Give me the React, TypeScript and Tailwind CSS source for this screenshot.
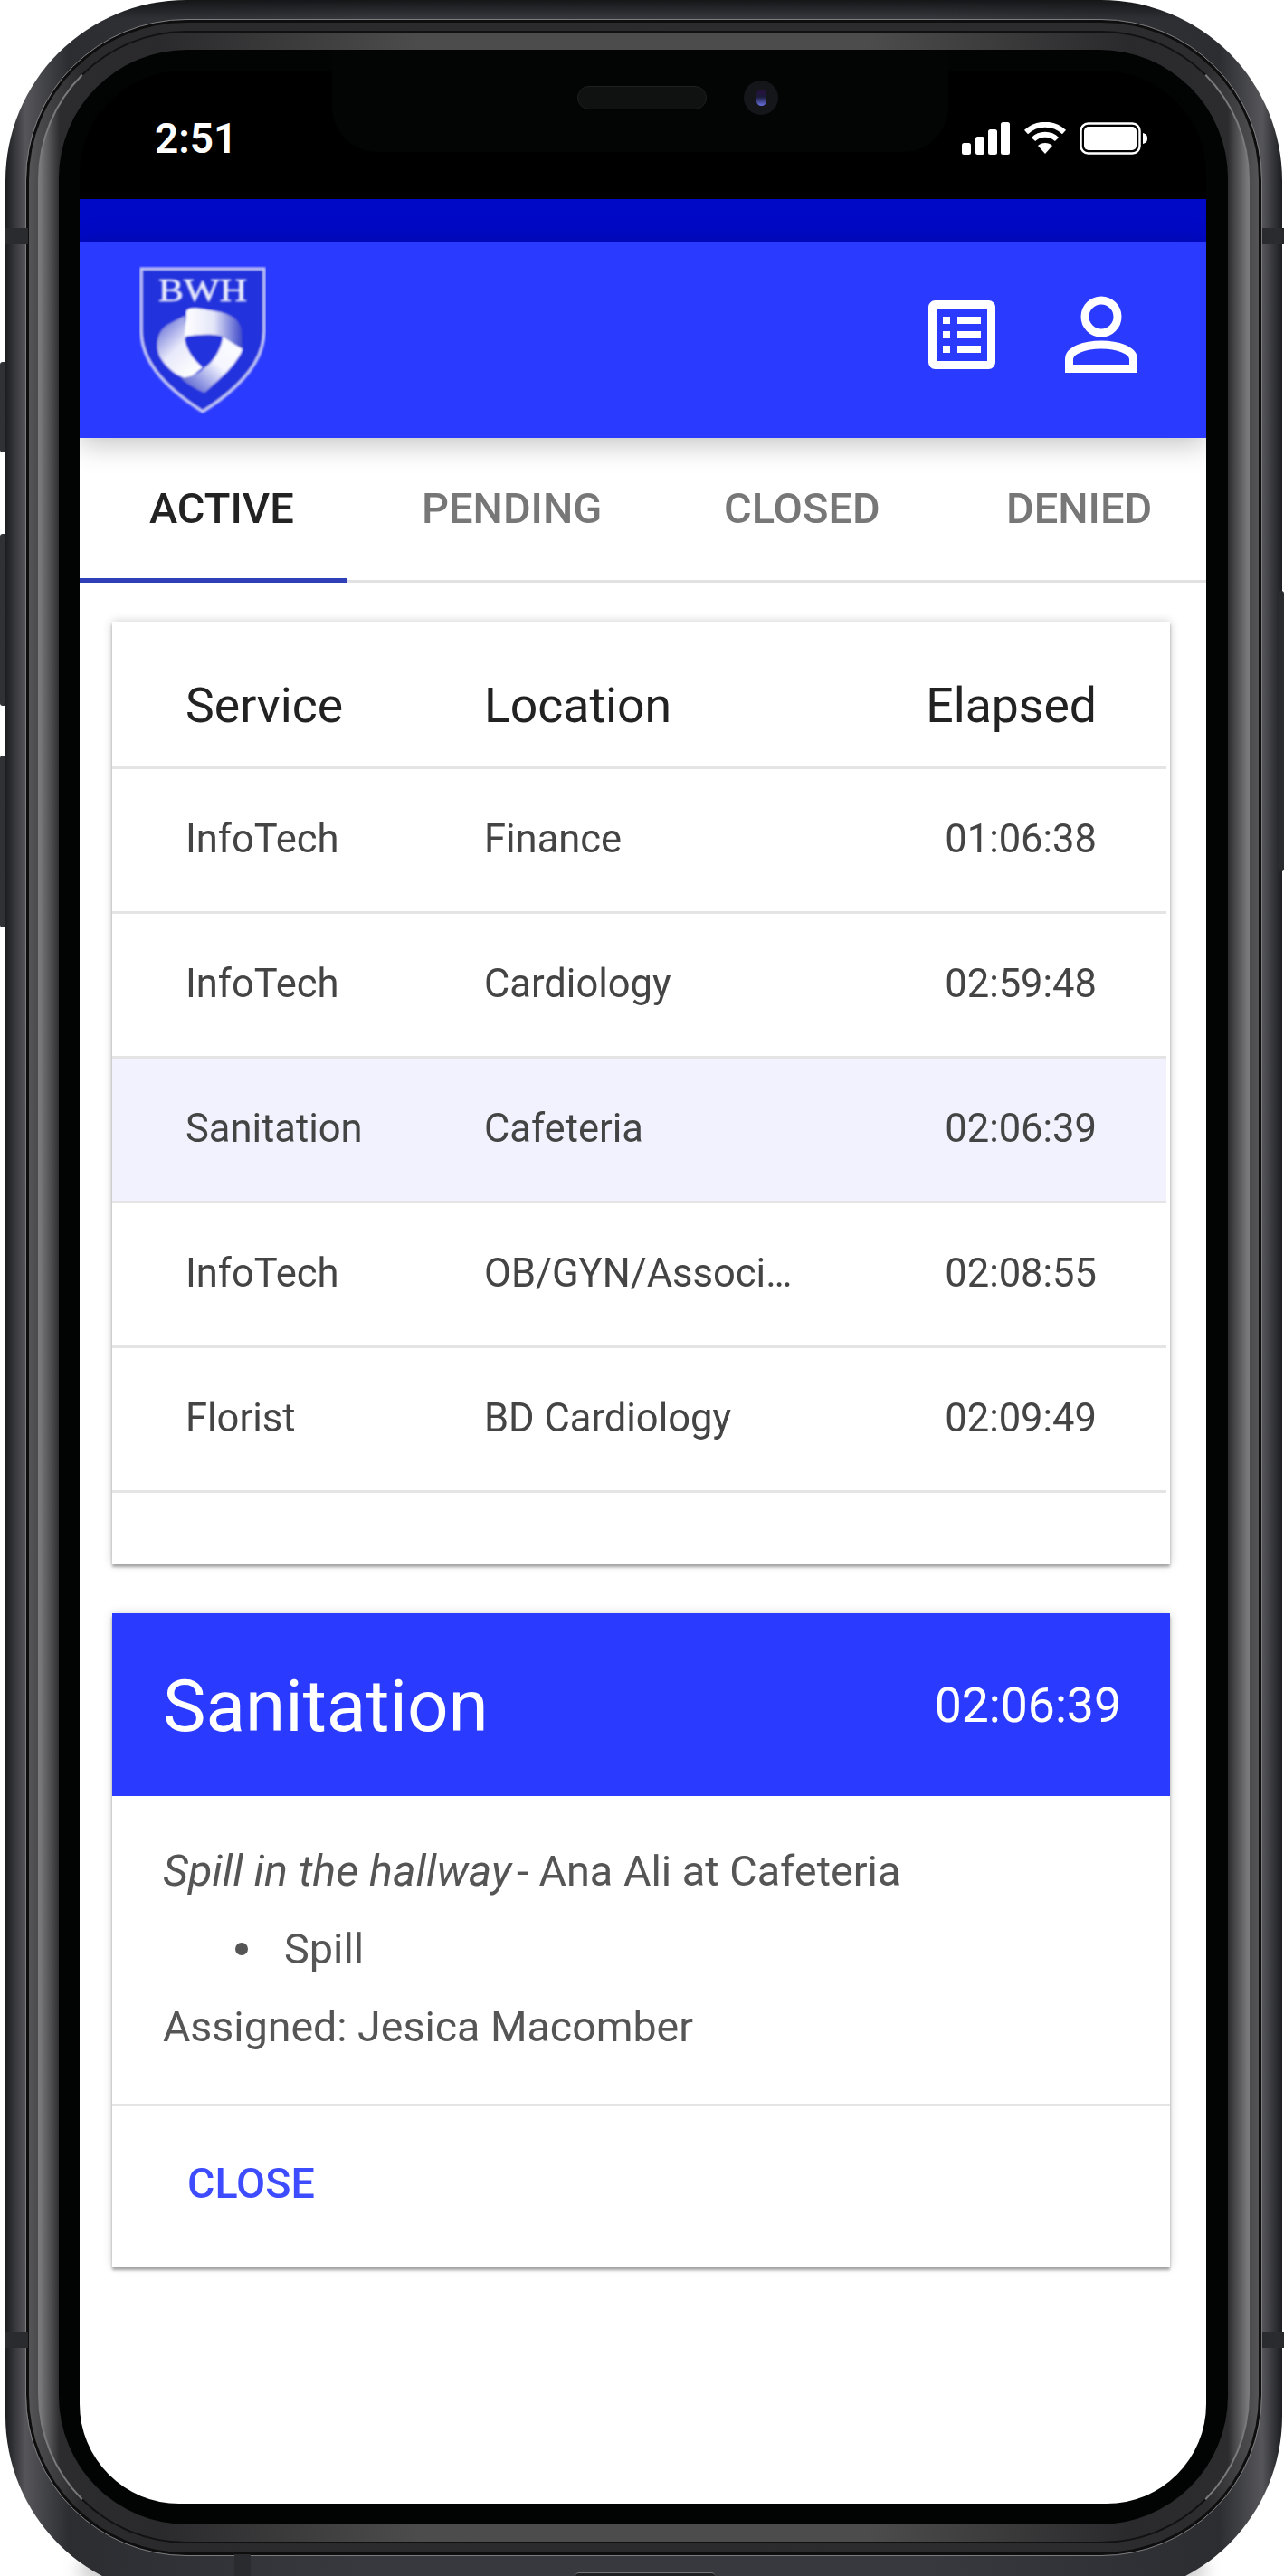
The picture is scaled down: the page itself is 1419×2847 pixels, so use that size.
import React from "react";

const font = { fontFamily: "Roboto, sans-serif" };

function ListIcon() {
  return (
    <svg width="74" height="76" viewBox="0 0 74 76" fill="none">
      <rect x="4.5" y="4.5" width="65" height="67" rx="3" stroke="#fff" strokeWidth="9" />
      <g fill="#fff">
        <rect x="16" y="18" width="8" height="8" />
        <rect x="16" y="34" width="8" height="8" />
        <rect x="16" y="50" width="8" height="8" />
        <rect x="32" y="18" width="26" height="8" />
        <rect x="32" y="34" width="26" height="8" />
        <rect x="32" y="50" width="26" height="8" />
      </g>
    </svg>
  );
}

function PersonIcon() {
  return (
    <svg width="80" height="86" viewBox="0 0 80 86" fill="none" stroke="#fff" strokeWidth="9">
      <circle cx="40" cy="23" r="18" />
      <path d="M4.5 80.5 V70 C4.5 60 22 54 40 54 C58 54 75.5 60 75.5 70 V80.5 Z" />
    </svg>
  );
}

function Logo() {
  return (
    <svg width="140" height="164" viewBox="0 0 140 164">
      <defs>
        <linearGradient id="a" x1="0" y1="0" x2="1" y2="0">
          <stop offset="0" stopColor="#ffffff" />
          <stop offset="0.5" stopColor="#e4e6f8" />
          <stop offset="1" stopColor="#3c47c8" />
        </linearGradient>
        <linearGradient id="b" x1="1" y1="0" x2="0" y2="1">
          <stop offset="0" stopColor="#ffffff" />
          <stop offset="0.45" stopColor="#f4f5ff" />
          <stop offset="1" stopColor="#3c47c8" />
        </linearGradient>
        <linearGradient id="c" x1="0" y1="0" x2="0.7" y2="1">
          <stop offset="0" stopColor="#4e58d0" />
          <stop offset="0.55" stopColor="#e8e9fa" />
          <stop offset="1" stopColor="#ffffff" />
        </linearGradient>
        <filter id="f" x="-5%" y="-5%" width="110%" height="110%">
          <feGaussianBlur stdDeviation="0.9" />
        </filter>
      </defs>
      <g filter="url(#f)">
        <path
          d="M2 3 H138 V72 C138 112 100 142 70 161 C40 142 2 112 2 72 Z"
          fill="#2232dc"
          stroke="#c9cdf6"
          strokeWidth="3"
        />
        <path d="M25 104 C15 90 20 70 33 64 L50 55 L52 76 C50 88 58 100 70 112 L54 125 C42 122 32 114 25 104 Z" fill="url(#c)" />
        <path d="M52 50 C56 44 66 47 84 50 C100 52 112 60 113 72 L114 92 L92 78 C80 74 62 76 50 78 Z" fill="url(#a)" />
        <path d="M114 92 C108 108 92 122 72 140 C62 136 52 130 46 124 C58 122 68 118 72 112 C80 104 90 92 92 78 Z" fill="url(#b)" />
        <path d="M50 80 C60 76 82 76 92 80 C90 94 80 108 71 113 C62 106 52 94 50 80 Z" fill="#2232dc" />
      </g>
      <text
        x="70"
        y="39"
        textAnchor="middle"
        fill="#e8eafc"
        stroke="#e8eafc"
        strokeWidth="0.6"
        filter="url(#f)"
        style={{ fontFamily: "'Liberation Serif', serif", fontSize: 36, fontWeight: 400 }}
        textLength="98"
        lengthAdjust="spacingAndGlyphs"
      >
        BWH
      </text>
    </svg>
  );
}

const rows = [
  ["InfoTech", "Finance", "01:06:38", false],
  ["InfoTech", "Cardiology", "02:59:48", false],
  ["Sanitation", "Cafeteria", "02:06:39", true],
  ["InfoTech", "OB/GYN/Associ…", "02:08:55", false],
  ["Florist", "BD Cardiology", "02:09:49", false],
] as const;

function Tabs() {
  return (
    <div className="flex h-[160px] shrink-0 items-stretch border-b-[3px] border-[#e2e2e2] text-[47px] font-medium text-[#777777] blur-[0.5px]">
      <div className="relative flex w-[296px] items-center pl-[77px] text-[#222222]">
        ACTIVE
        <div className="absolute -bottom-[3px] left-0 h-[5px] w-full bg-[#2e3fb8]" />
      </div>
      <div className="flex w-[333px] items-center pl-[82px]">PENDING</div>
      <div className="flex w-[313px] items-center pl-[83px]">CLOSED</div>
      <div className="flex flex-1 items-center pl-[82px]">DENIED</div>
    </div>
  );
}

function TableCard() {
  return (
    <div className="ml-[36px] mt-[43px] h-[1042px] w-[1169px] bg-white shadow-[0_0_10px_rgba(0,0,0,0.2),0_3px_3px_rgba(0,0,0,0.3)] blur-[0.5px]">
      <div className="mr-[4px] flex h-[163px] items-center border-b-[3px] border-[#e4e4e4] pl-[81px] pr-[77px] pt-[27px] text-[53.5px] text-[#222222]">
        <div className="w-[330px]">Service</div>
        <div className="flex-1">Location</div>
        <div>Elapsed</div>
      </div>
      {rows.map(([service, location, time, selected]) => (
        <div
          key={service + location}
          className={
            "mr-[4px] flex h-[160px] items-center border-b-[3px] border-[#e4e4e4] pb-[1px] pl-[81px] pr-[77px] text-[43.5px] text-[#444444] " +
            (selected ? "bg-[#f1f2fd]" : "bg-white")
          }
        >
          <div className="w-[330px]">{service}</div>
          <div className="flex-1">{location}</div>
          <div>{time}</div>
        </div>
      ))}
    </div>
  );
}

function DetailCard() {
  return (
    <div className="ml-[36px] mt-[54px] h-[722px] w-[1169px] bg-white shadow-[0_0_10px_rgba(0,0,0,0.16),0_4px_3px_rgba(0,0,0,0.33)] blur-[0.5px]">
      <div className="flex h-[202px] items-center justify-between bg-[#2b3aff] pl-[56px] pr-[54px] pt-[3px] text-white">
        <div className="text-[80px]">Sanitation</div>
        <div className="text-[53.5px]">02:06:39</div>
      </div>
      <div className="flex h-[343px] flex-col justify-center border-b-[3px] border-[#e4e4e4] pb-[3px] pl-[56px] pr-[55px] text-[46.8px] leading-[86px] text-[#555555]">
        <p>
          <em className="-mr-[6px] text-[48.5px]">Spill in the hallway</em> - Ana Ali at Cafeteria
        </p>
        <div className="flex items-center pl-[80px]">
          <span className="mr-[40px] h-[14px] w-[14px] rounded-full bg-[#555555]" />
          Spill
        </div>
        <p className="text-[46.5px]">Assigned: Jesica Macomber</p>
      </div>
      <div className="flex h-[177px] items-center pb-[5px] pl-[83px] text-[46.6px] font-medium text-[#3d4cff]">CLOSE</div>
    </div>
  );
}

function StatusIcons() {
  return (
    <div className="flex items-center gap-[14px]">
      <svg width="54" height="36" viewBox="0 0 54 36" fill="#fff">
        <rect x="0" y="23" width="10" height="13" rx="2.5" />
        <rect x="15" y="16" width="10" height="20" rx="2.5" />
        <rect x="29" y="8" width="10" height="28" rx="2.5" />
        <rect x="43" y="0" width="10" height="36" rx="2.5" />
      </svg>
      <svg width="48" height="36" viewBox="0 0 48 36" fill="none" stroke="#fff" strokeWidth="6">
        <path d="M3 11 C15 0 33 0 45 11" />
        <path d="M11 19 C18 12 30 12 37 19" />
        <path d="M24 35 L16 26 C20 22 28 22 32 26 Z" fill="#fff" stroke="none" />
      </svg>
      <svg width="76" height="36" viewBox="0 0 76 36">
        <rect x="1.5" y="1.5" width="65" height="33" rx="8" fill="none" stroke="#fff" strokeWidth="2.5" />
        <rect x="5" y="5" width="58" height="26" rx="5" fill="#fff" />
        <path d="M70 12 C74 13 75 15 75 18 C75 21 74 23 70 24 Z" fill="#fff" />
      </svg>
    </div>
  );
}

function Screen() {
  return (
    <div className="relative flex h-[2712px] w-[1245px] flex-col overflow-hidden rounded-b-[110px] rounded-t-[140px] bg-[#020403]">
      <div className="mt-[23px] flex h-[142px] shrink-0 items-center justify-between rounded-t-[115px] bg-black pl-[83px] pr-[64px] pt-[8px]">
        <div className="text-[46px] font-semibold leading-none text-white">2:51</div>
        <StatusIcons />
      </div>
      <div className="absolute left-[279px] top-0 flex h-[113px] w-[681px] items-start gap-[41px] rounded-b-[50px] bg-[#030505] pl-[271px] pt-[40px]">
        <div className="h-[26px] w-[143px] rounded-full border border-[#1e2020] bg-[#101211]" />
        <div className="-mt-[6px] flex h-[38px] w-[38px] items-center justify-center rounded-full bg-[#14161a]">
          <div className="h-[18px] w-[11px] rounded-full bg-[linear-gradient(to_bottom,#2a1040,#1a1a3a_45%,#6a70e0)]" />
        </div>
      </div>
      <div className="h-[48px] shrink-0 bg-[#0009c6]" />
      <div className="relative z-10 flex h-[216px] shrink-0 items-center justify-between bg-[#2b3aff] pl-[66px] pr-[76px] shadow-[0_6px_30px_rgba(0,0,0,0.25)]">
        <Logo />
        <div className="flex items-center gap-[77px] pb-[12px] blur-[0.6px]">
          <ListIcon />
          <PersonIcon />
        </div>
      </div>
      <div className="flex-1 bg-white">
        <Tabs />
        <TableCard />
        <DetailCard />
      </div>
    </div>
  );
}

export default function App() {
  return (
    <div className="relative h-[2847px] w-[1419px] overflow-hidden bg-white" style={font}>
      <div className="absolute bottom-0 left-[90px] h-[12px] w-[1240px] bg-black/40 blur-[10px]" />
      <div className="absolute left-0 top-[400px] h-[100px] w-[7px] rounded-l-[3px] bg-[#303135]" />
      <div className="absolute left-0 top-[590px] h-[190px] w-[7px] rounded-l-[3px] bg-[#303135]" />
      <div className="absolute left-0 top-[835px] h-[190px] w-[7px] rounded-l-[3px] bg-[#303135]" />
      <div className="relative ml-[6px] h-[2870px] w-[1411px] rounded-[200px] bg-[linear-gradient(to_bottom,#151618,transparent_21px),linear-gradient(to_right,#1c1d20,#55555a_22px,#2c2d31_70px,#38393e_400px,#38393e_calc(100%-400px),#2c2d31_calc(100%-70px),#55555a_calc(100%-22px),#1c1d20)] pl-[22px] pr-[22px] pt-[21px]">
        <div className="h-[2804px] w-[1367px] rounded-[178px] border border-[#7c7c7e] bg-[linear-gradient(to_right,#58585a,#4a4a4c_14px,#2a2a2c_60px,#2c2c2e_calc(100%-60px),#4a4a4c_calc(100%-14px),#58585a)] px-[13px] pt-[12px] shadow-[inset_0_0_0_3px_#0e0e0e]">
          <div className="h-[2777px] w-[1339px] rounded-[164px] border-[2px] border-x-[#7a7a7c] border-b-[#111111] border-t-[#111111] bg-[linear-gradient(to_right,#7a7a7c,#2c2c2e_22px,#2a2a2c_130px,#4c4c4c_420px,#4c4c4c_calc(100%-420px),#2a2a2c_calc(100%-130px),#2c2c2e_calc(100%-22px),#7a7a7c)] pl-[21px] pr-[22px] pt-[19px]">
            <div className="h-[2735px] w-[1292px] rounded-[142px] bg-[#020403] pl-[23px] pr-[24px]">
              <Screen />
            </div>
          </div>
        </div>
      </div>
      <div className="absolute right-0 top-[653px] h-[310px] w-[6px] rounded-r-[3px] bg-[#2a2b2e]" />
      <div className="absolute left-[6px] top-[252px] h-[18px] w-[25px] bg-[#2a2b2e]" />
      <div className="absolute right-0 top-[252px] h-[18px] w-[24px] bg-[#2a2b2e]" />
      <div className="absolute left-[6px] top-[2577px] h-[18px] w-[25px] bg-[#2a2b2e]" />
      <div className="absolute right-0 top-[2577px] h-[18px] w-[24px] bg-[#2a2b2e]" />
      <div className="absolute left-[259px] top-[2823px] h-[24px] w-[18px] bg-[#2a2b2e]" />
      <div className="absolute left-[636px] top-[2843px] h-[4px] w-[154px] rounded-t-[4px] border-t border-[#77777a] bg-[#1f2022]" />
    </div>
  );
}
